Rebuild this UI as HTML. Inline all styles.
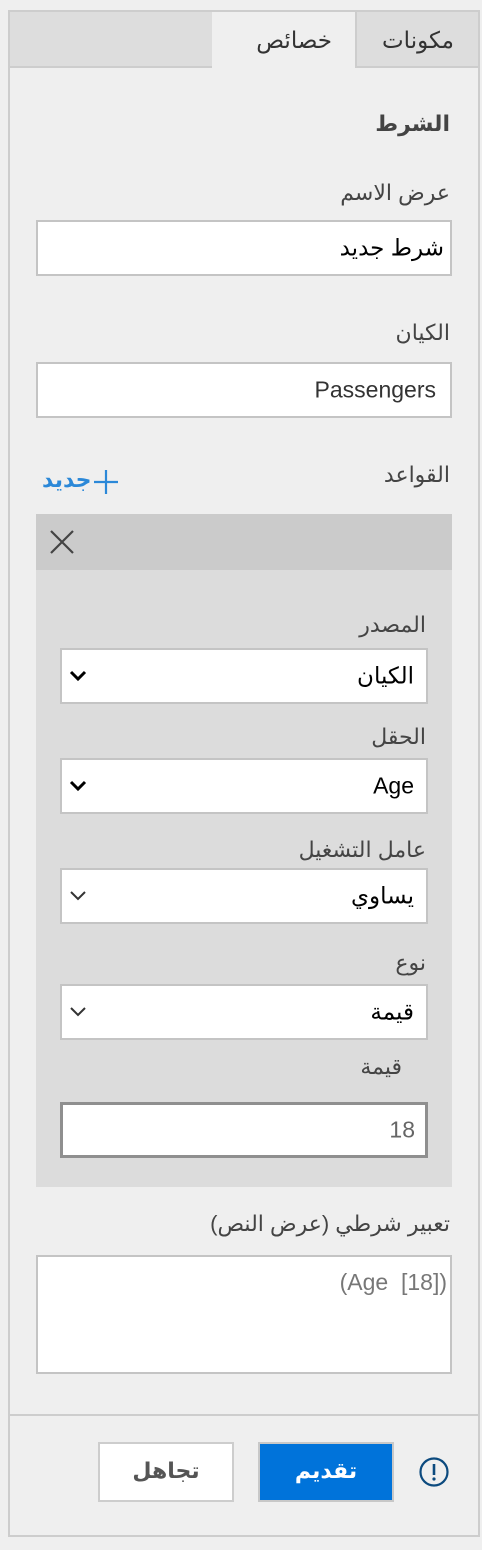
<!DOCTYPE html>
<html><head><meta charset="utf-8"><style>
*{box-sizing:border-box;margin:0;padding:0}
body{width:482px;height:1550px;background:#efefef;font-family:"Liberation Sans","DejaVu Sans",sans-serif;position:relative;overflow:hidden}
.a{position:absolute}
.lbl{position:absolute;direction:rtl;font-size:22px;color:#444;white-space:nowrap;line-height:26px}
.box{position:absolute;background:#fff;border:2px solid #c4c4c4}
.txt{position:absolute;right:12px;top:50%;transform:translateY(-50%);direction:rtl;white-space:nowrap}
.chev{position:absolute;left:6px;top:50%;margin-top:-6px}
</style></head><body>
<div class="a" style="left:8px;top:10px;width:472px;height:1527px;border:2px solid #cdcdcd;background:#efefef"></div>
<div class="a" style="left:10px;top:12px;width:202px;height:56px;background:#dddddd;border-bottom:2px solid #cdcdcd"></div>
<div class="a" style="left:212px;top:12px;width:143px;height:56px;background:#efefef"></div>
<div class="a" style="left:355px;top:12px;width:123px;height:56px;background:#dddddd;border-left:2px solid #cdcdcd;border-bottom:2px solid #cdcdcd"></div>
<div class="lbl" style="right:28px;top:27px;font-size:23px;color:#333">مكونات</div>
<div class="lbl" style="right:150px;top:27px;font-size:23px;color:#333">خصائص</div>

<div class="lbl" style="right:32px;top:111px;font-weight:bold;font-size:22px;color:#444">الشرط</div>
<div class="lbl" style="right:32px;top:180px">عرض الاسم</div>
<div class="box" style="left:36px;top:220px;width:416px;height:56px"><div class="txt" style="font-size:23px;color:#000;right:6px">شرط جديد</div></div>
<div class="lbl" style="right:32px;top:320px">الكيان</div>
<div class="box" style="left:36px;top:362px;width:416px;height:56px"><div class="txt" style="font-size:23px;color:#333;right:14px">Passengers</div></div>
<div class="lbl" style="right:32px;top:462px">القواعد</div>
<div class="lbl" style="left:42px;top:467px;color:#2b88d8;font-size:22px;font-weight:bold">جديد</div>
<svg class="a" style="left:93px;top:469px" width="26" height="26"><path d="M13 1v24M1 13h24" stroke="#2b88d8" stroke-width="2.2"/></svg>

<div class="a" style="left:36px;top:514px;width:416px;height:673px;background:#dcdcdc"></div>
<div class="a" style="left:36px;top:514px;width:416px;height:56px;background:#cbcbcb"></div>
<svg class="a" style="left:48px;top:528px" width="28" height="28"><path d="M3 3L25 25M25 3L3 25" stroke="#444" stroke-width="2.2"/></svg>

<div class="lbl" style="right:56px;top:612px">المصدر</div>
<div class="box" style="left:60px;top:648px;width:368px;height:56px"><div class="txt" style="font-size:23px;color:#000">الكيان</div><svg class="chev" width="20" height="12"><path d="M3 2L10 9L17 2" fill="none" stroke="#000" stroke-width="3"/></svg></div>
<div class="lbl" style="right:56px;top:724px">الحقل</div>
<div class="box" style="left:60px;top:758px;width:368px;height:56px"><div class="txt" style="font-size:23px;color:#000">Age</div><svg class="chev" width="20" height="12"><path d="M3 2L10 9L17 2" fill="none" stroke="#000" stroke-width="3"/></svg></div>
<div class="lbl" style="right:56px;top:837px">عامل التشغيل</div>
<div class="box" style="left:60px;top:868px;width:368px;height:56px"><div class="txt" style="font-size:23px;color:#000">يساوي</div><svg class="chev" width="20" height="12"><path d="M3 2L10 9L17 2" fill="none" stroke="#333" stroke-width="2"/></svg></div>
<div class="lbl" style="right:56px;top:950px">نوع</div>
<div class="box" style="left:60px;top:984px;width:368px;height:56px"><div class="txt" style="font-size:23px;color:#000">قيمة</div><svg class="chev" width="20" height="12"><path d="M3 2L10 9L17 2" fill="none" stroke="#333" stroke-width="2"/></svg></div>
<div class="lbl" style="right:80px;top:1054px">قيمة</div>
<div class="box" style="left:60px;top:1102px;width:368px;height:56px;border:3px solid #8f8f8f"><div class="txt" style="font-size:23px;color:#666;right:10px">18</div></div>

<div class="lbl" style="right:32px;top:1211px">تعبير شرطي (عرض النص)</div>
<div class="box" style="left:36px;top:1255px;width:416px;height:119px"><div class="a" style="right:3px;top:12px;font-size:23px;color:#777;white-space:nowrap">(Age&nbsp; [18])</div></div>

<div class="a" style="left:10px;top:1414px;width:468px;height:2px;background:#cdcdcd"></div>
<div class="a" style="left:98px;top:1442px;width:136px;height:60px;background:#fff;border:2px solid #cdcdcd"></div>
<div class="lbl" style="left:98px;width:136px;text-align:center;top:1458px;font-weight:bold;font-size:22px;color:#555">تجاهل</div>
<div class="a" style="left:258px;top:1442px;width:136px;height:60px;background:#0073da;border:2px solid #c8c8c8"></div>
<div class="lbl" style="left:258px;width:136px;text-align:center;top:1458px;font-weight:bold;font-size:22px;color:#fff">تقديم</div>
<svg class="a" style="left:419px;top:1457px" width="32" height="32"><circle cx="15" cy="15" r="13.5" fill="none" stroke="#0c4a7e" stroke-width="2.2"/><path d="M15 7v11" stroke="#0c4a7e" stroke-width="2.6"/><circle cx="15" cy="22" r="1.6" fill="#0c4a7e"/></svg>
</body></html>
